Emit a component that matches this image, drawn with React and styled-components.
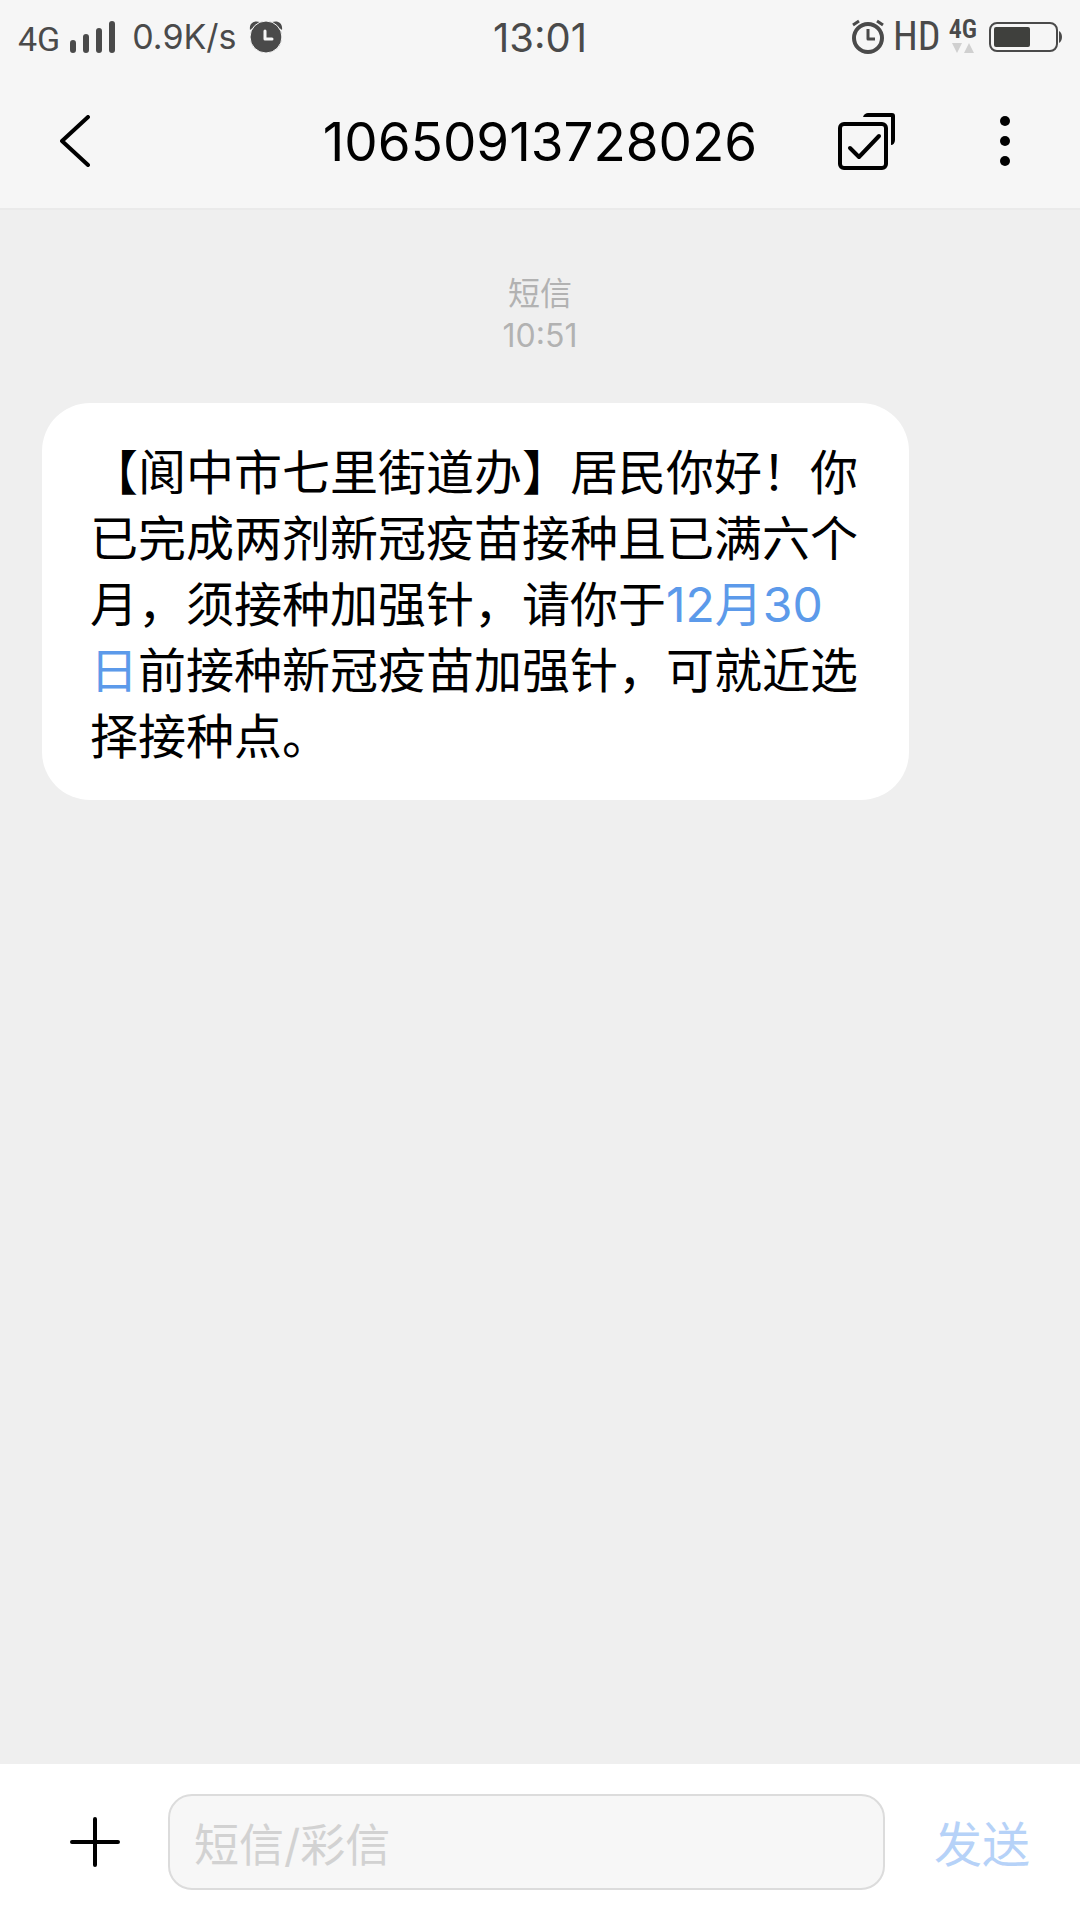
import React, { useState } from 'react';
import styled, { createGlobalStyle } from 'styled-components';

const GlobalStyle = createGlobalStyle`
  * {
    box-sizing: border-box;
  }

  body {
    margin: 0;
    background: #efefef;
    color: #000;
    font-family: Inter, 'Noto Sans CJK SC', sans-serif;
  }

  button,
  input {
    padding: 0;
    border: 0;
    background: none;
    color: inherit;
    font: inherit;
  }
`;

const Screen = styled('div')`
  display: flex;
  flex-direction: column;
  min-height: 100vh;
`;

const TopBar = styled('header')`
  background: #f6f6f6;
  border-bottom: 2px solid #eaeaea;
`;

const StatusBar = styled('div')`
  display: grid;
  grid-template-columns: 1fr auto 1fr;
  align-items: center;
  height: 74px;
  padding: 0 18px;
  color: #4a4a4a;
  line-height: 40px;
`;

const StatusGroup = styled('div')`
  display: flex;
  align-items: center;
  justify-content: ${({ $end }) => ($end ? 'flex-end' : 'flex-start')};
  gap: ${({ $end }) => ($end ? '8px' : '10px')};
`;

const NetworkType = styled('span')`
  padding-top: 4px;
  font-family: Roboto, sans-serif;
  font-size: 34px;
`;

const Speed = styled('span')`
  padding: 0 2px 0 6px;
  font-size: 34px;
`;

const Clock = styled('span')`
  padding-top: 2px;
  font-size: 40px;
`;

const Hd = styled('span')`
  font-family: 'Roboto Condensed', 'Liberation Sans Narrow', Roboto, sans-serif;
  font-size: 40px;
`;

const DataState = styled('span')`
  display: flex;
  flex-direction: column;
  align-items: center;
  padding: 0 4px 6px 0;
  font-family: 'Roboto Condensed', 'Liberation Sans Narrow', Roboto, sans-serif;
  font-size: 26px;
  font-weight: 600;
  line-height: 28px;
`;

const Icon = styled('svg')`
  display: block;
  flex: none;
  fill: none;
  stroke: currentColor;
  stroke-linecap: round;
  stroke-linejoin: round;
`;

const TitleBar = styled('div')`
  display: grid;
  grid-template-columns: 1fr auto 1fr;
  align-items: center;
  height: 134px;
  padding: 0 40px;
`;

const Title = styled('h1')`
  margin: 0;
  padding-top: 2px;
  font-size: 53px;
  font-weight: 400;
  line-height: 64px;
`;

const Actions = styled('div')`
  display: flex;
  justify-content: flex-end;
  gap: 68px;
`;

const IconButton = styled('button')`
  display: flex;
  align-items: center;
  justify-content: center;
  width: 70px;
  height: 70px;
`;

const Thread = styled('main')`
  flex: 1;
  padding: 63px 42px;
`;

const Stamp = styled('div')`
  display: flex;
  flex-direction: column;
  align-items: center;
  margin-bottom: 46px;
  color: #b2b2b2;
  font-size: 32px;
  line-height: 42px;
`;

const Bubble = styled('p')`
  width: fit-content;
  max-width: calc(100% - 129px);
  margin: 0;
  padding: 37px 48px 30px;
  border-radius: 48px;
  background: #fff;
  font-size: 48px;
  line-height: 66px;
`;

const DateLink = styled('a')`
  color: #5c9aea;
  text-decoration: none;
`;

const Composer = styled('form')`
  display: flex;
  align-items: center;
  height: 156px;
  padding: 0 42px 0 60px;
  background: #fff;
`;

const MessageInput = styled('input')`
  flex: 1;
  min-width: 0;
  height: 96px;
  margin: 0 41px 0 38px;
  padding: 6px 24px 0;
  border: 2px solid #dcdcdc;
  border-radius: 24px;
  background: #f7f7f7;
  font-size: 45px;

  &::placeholder {
    color: #d2d2d2;
    opacity: 1;
  }
`;

const SendButton = styled('button')`
  width: 112px;
  padding-top: 6px;
  color: #b6d2f8;
  font-size: 48px;
  line-height: 66px;
`;

const SignalIcon = () => (
  <Icon width="46" height="34" viewBox="0 0 46 34" strokeWidth="6">
    <path d="M3 23v7M16 17v13M29 11v19M42 4v26" />
  </Icon>
);

const AlarmSolidIcon = () => (
  <Icon width="34" height="34" viewBox="0 0 34 34">
    <path
      d="M1 10C0 3 5 0 11 2zM33 10c1-7-4-10-10-8z"
      fill="currentColor"
      stroke="none"
    />
    <circle cx="17" cy="17" r="16" fill="currentColor" stroke="#f6f6f6" />
    <path d="M16 11v8h7" stroke="#f6f6f6" strokeWidth="3" />
  </Icon>
);

const AlarmIcon = () => (
  <Icon width="34" height="36" viewBox="0 0 34 36" strokeWidth="4">
    <circle cx="17" cy="19" r="14" />
    <path
      d="M17 10v10h7M2 6l6-4M32 6l-6-4"
      strokeWidth="3"
      strokeLinecap="butt"
    />
  </Icon>
);

const TrafficIcon = () => (
  <Icon width="22" height="10" viewBox="0 0 22 10">
    <path d="M0 0h10L5 10zM12 10h10L17 0z" fill="#d0d0d0" stroke="none" />
  </Icon>
);

const BatteryIcon = () => (
  <Icon width="73" height="30" viewBox="0 0 73 30">
    <rect x="1" y="1" width="67" height="28" rx="7" strokeWidth="2" />
    <rect x="5" y="5" width="36" height="20" rx="2" fill="#3f403d" stroke="none" />
    <path d="M70 9c4 2 4 10 0 12z" fill="currentColor" stroke="none" />
  </Icon>
);

const BackIcon = () => (
  <Icon width="30" height="52" viewBox="0 0 30 52" strokeWidth="4">
    <path d="M28 2L2 26l26 24" />
  </Icon>
);

const SelectIcon = () => (
  <Icon width="58" height="58" viewBox="0 0 58 58" strokeWidth="4">
    <rect x="2" y="12" width="46" height="44" rx="4" />
    <path d="M12 36l9 9 20-21" />
    <path
      d="M25 5c1-3 3-4 5-4h24q3 0 3 3v24c0 3-2 5-4 5V5z"
      fill="currentColor"
      stroke="none"
    />
  </Icon>
);

const MoreIcon = () => (
  <Icon width="10" height="50" viewBox="0 0 10 50">
    <g fill="currentColor" stroke="none">
      <circle cx="5" cy="5" r="5" />
      <circle cx="5" cy="25" r="5" />
      <circle cx="5" cy="45" r="5" />
    </g>
  </Icon>
);

const PlusIcon = () => (
  <Icon width="50" height="50" viewBox="0 0 50 50" strokeWidth="4">
    <path d="M25 2v46M2 25h46" />
  </Icon>
);

const App = () => {
  const [draft, setDraft] = useState('');

  return (
    <Screen>
      <GlobalStyle />
      <TopBar>
        <StatusBar>
          <StatusGroup>
            <NetworkType>4G</NetworkType>
            <SignalIcon />
            <Speed>0.9K/s</Speed>
            <AlarmSolidIcon />
          </StatusGroup>
          <Clock>13:01</Clock>
          <StatusGroup $end>
            <AlarmIcon />
            <Hd>HD</Hd>
            <DataState>
              4G
              <TrafficIcon />
            </DataState>
            <BatteryIcon />
          </StatusGroup>
        </StatusBar>
        <TitleBar>
          <IconButton type="button" aria-label="返回">
            <BackIcon />
          </IconButton>
          <Title>10650913728026</Title>
          <Actions>
            <IconButton type="button" aria-label="选择">
              <SelectIcon />
            </IconButton>
            <IconButton type="button" aria-label="更多">
              <MoreIcon />
            </IconButton>
          </Actions>
        </TitleBar>
      </TopBar>
      <Thread>
        <Stamp>
          <span>短信</span>
          <time>10:51</time>
        </Stamp>
        <Bubble>
          【阆中市七里街道办】居民你好！你已完成两剂新冠疫苗接种且已满六个月，须接种加强针，请你于
          <DateLink href="#date">12月30日</DateLink>
          前接种新冠疫苗加强针，可就近选择接种点。
        </Bubble>
      </Thread>
      <Composer onSubmit={e => e.preventDefault()}>
        <IconButton type="button" aria-label="添加">
          <PlusIcon />
        </IconButton>
        <MessageInput
          aria-label="短信/彩信"
          placeholder="短信/彩信"
          value={draft}
          onChange={e => setDraft(e.target.value)}
        />
        <SendButton type="submit">发送</SendButton>
      </Composer>
    </Screen>
  );
};

export default App;
